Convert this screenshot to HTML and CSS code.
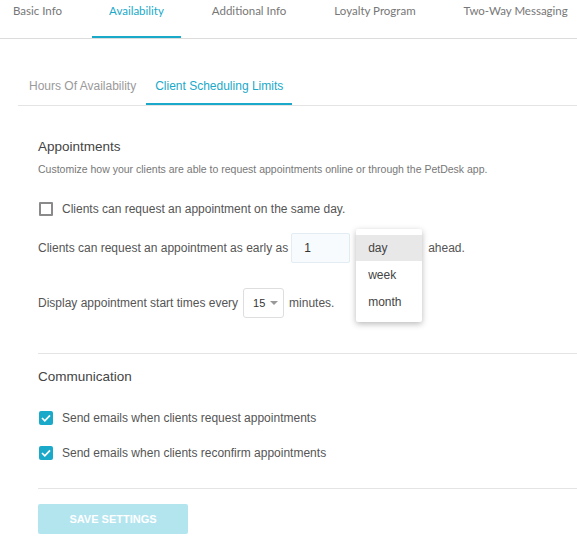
FILE: index.html
```html
<!DOCTYPE html>
<html>
<head>
<meta charset="utf-8">
<link rel="stylesheet" href="styles.css">
</head>
<body>
<nav class="tabs">
  <a class="tab first">Basic Info</a>
  <a class="tab active">Availability</a>
  <a class="tab">Additional Info</a>
  <a class="tab">Loyalty Program</a>
  <a class="tab">Two-Way Messaging</a>
</nav>
<div class="subtabs">
  <a class="subtab">Hours Of Availability</a>
  <a class="subtab active">Client Scheduling Limits</a>
</div>
<main class="content">
  <h2 class="heading first-heading">Appointments</h2>
  <p class="desc">Customize how your clients are able to request appointments online or through the PetDesk app.</p>
  <label class="check-row first-check">
    <span class="box"></span>
    <span>Clients can request an appointment on the same day.</span>
  </label>
  <div class="row row-early">
    <span>Clients can request an appointment as early as</span>
    <span class="input">1</span>
    <span class="unit">
      <span class="menu">
        <span class="item selected">day</span>
        <span class="item">week</span>
        <span class="item">month</span>
      </span>
    </span>
    <span>ahead.</span>
  </div>
  <div class="row row-every">
    <span>Display appointment start times every</span>
    <span class="select">15<svg class="caret" width="8" height="4" viewBox="0 0 8 4"><path d="M0 0h8L4 4z" fill="#999"/></svg></span>
    <span>minutes.</span>
  </div>
  <hr class="divider div1">
  <h2 class="heading comm-heading">Communication</h2>
  <label class="check-row check-a">
    <span class="box checked"><svg width="10" height="8" viewBox="0 0 10 8"><path d="M1 4l2.8 2.8L9 1.3" fill="none" stroke="#fff" stroke-width="1.7"/></svg></span>
    <span>Send emails when clients request appointments</span>
  </label>
  <label class="check-row check-b">
    <span class="box checked"><svg width="10" height="8" viewBox="0 0 10 8"><path d="M1 4l2.8 2.8L9 1.3" fill="none" stroke="#fff" stroke-width="1.7"/></svg></span>
    <span>Send emails when clients reconfirm appointments</span>
  </label>
  <hr class="divider div2">
  <button class="save">SAVE SETTINGS</button>
</main>
</body>
</html>
```
FILE: styles.css
```css
html, body {
  margin: 0;
  padding: 0;
  background: #fff;
}
body {
  font-family: "Liberation Sans", Arial, sans-serif;
  color: #555;
  width: 577px;
  overflow: hidden;
}
.tabs {
  display: flex;
  height: 38px;
  border-bottom: 1px solid #dcdcdc;
  font-family: Lato, "Open Sans", sans-serif;
  font-size: 11.5px;
  gap: 14px;
}
.tab {
  display: block;
  padding: 4px 17px 0;
  line-height: 14px;
  color: #777;
  box-sizing: border-box;
  height: 38px;
  border-bottom: 2px solid transparent;
  white-space: nowrap;
}
.tab.first {
  padding-left: 13px;
  padding-right: 16px;
}
.tab.active {
  color: #1aa9c9;
  border-bottom-color: #1aa9c9;
}
.subtabs {
  display: flex;
  margin: 33px 0 0 18px;
  border-bottom: 1px solid #e4e4e4;
  font-size: 12px;
}
.subtab {
  display: block;
  padding: 0 10px 0 11px;
  height: 31px;
  line-height: 28px;
  border-bottom: 2px solid transparent;
  color: #9a9a9a;
  white-space: nowrap;
}
.subtab.active {
  color: #1aa9c9;
  border-bottom-color: #1aa9c9;
  padding: 0 9px;
}
.content {
  padding-left: 38px;
  font-size: 12px;
}
.heading {
  margin: 0;
  font-size: 13.5px;
  font-weight: normal;
  line-height: 20px;
  color: #444;
}
.first-heading { margin-top: 31px; }
.desc {
  margin: 4px 0 0;
  font-size: 10.5px;
  line-height: 16px;
  color: #777;
}
.check-row {
  display: flex;
  align-items: center;
  height: 20px;
  gap: 9px;
  color: #555;
}
.first-check { margin-top: 22px; }
.check-a { margin-top: 21px; }
.check-b { margin-top: 15px; }
.box {
  width: 14px;
  height: 14px;
  box-sizing: border-box;
  border: 2px solid #8a8a8a;
  border-radius: 1px;
  margin-left: 1px;
  display: flex;
  align-items: center;
  justify-content: center;
}
.box.checked {
  border: none;
  background: #1aa9c9;
  border-radius: 2px;
}
.row {
  display: flex;
  align-items: center;
  height: 30px;
}
.row-early { margin-top: 14px; }
.row-every { margin-top: 25px; }
.input {
  width: 59px;
  height: 30px;
  box-sizing: border-box;
  margin-left: 3px;
  padding-left: 12px;
  line-height: 28px;
  border: 1px solid #e3ecf2;
  border-radius: 2px;
  background: #f8fbfe;
  color: #333;
}
.unit {
  position: relative;
  width: 66px;
  height: 30px;
  margin: 0 6px;
}
.menu {
  position: absolute;
  top: -4px;
  left: 0;
  width: 66px;
  padding: 6px 0;
  background: #fff;
  border-radius: 2px;
  box-shadow: 0 2px 6px rgba(0, 0, 0, 0.28);
  display: flex;
  flex-direction: column;
  z-index: 2;
}
.item {
  height: 27px;
  line-height: 27px;
  padding-left: 12px;
  color: #444;
}
.item.selected {
  background: #e8e8e8;
  height: 26px;
  line-height: 26px;
  margin-bottom: 1px;
}
.select {
  display: flex;
  align-items: center;
  gap: 5px;
  width: 41px;
  height: 30px;
  box-sizing: border-box;
  padding-left: 9px;
  margin: 0 5px;
  border: 1px solid #dedede;
  border-radius: 3px;
  font-size: 11px;
  color: #333;
}
.divider {
  border: none;
  border-top: 1px solid #e4e4e4;
  margin: 0;
  height: 0;
}
.div1 { margin-top: 35px; }
.comm-heading { margin-top: 13px; }
.div2 { margin-top: 25px; }
.save {
  display: block;
  margin-top: 15px;
  width: 150px;
  height: 30px;
  border: none;
  border-radius: 2px;
  background: #b3e5ef;
  color: #fff;
  font-family: "Liberation Sans", Arial, sans-serif;
  font-weight: bold;
  font-size: 11px;
  padding: 0;
}
```
